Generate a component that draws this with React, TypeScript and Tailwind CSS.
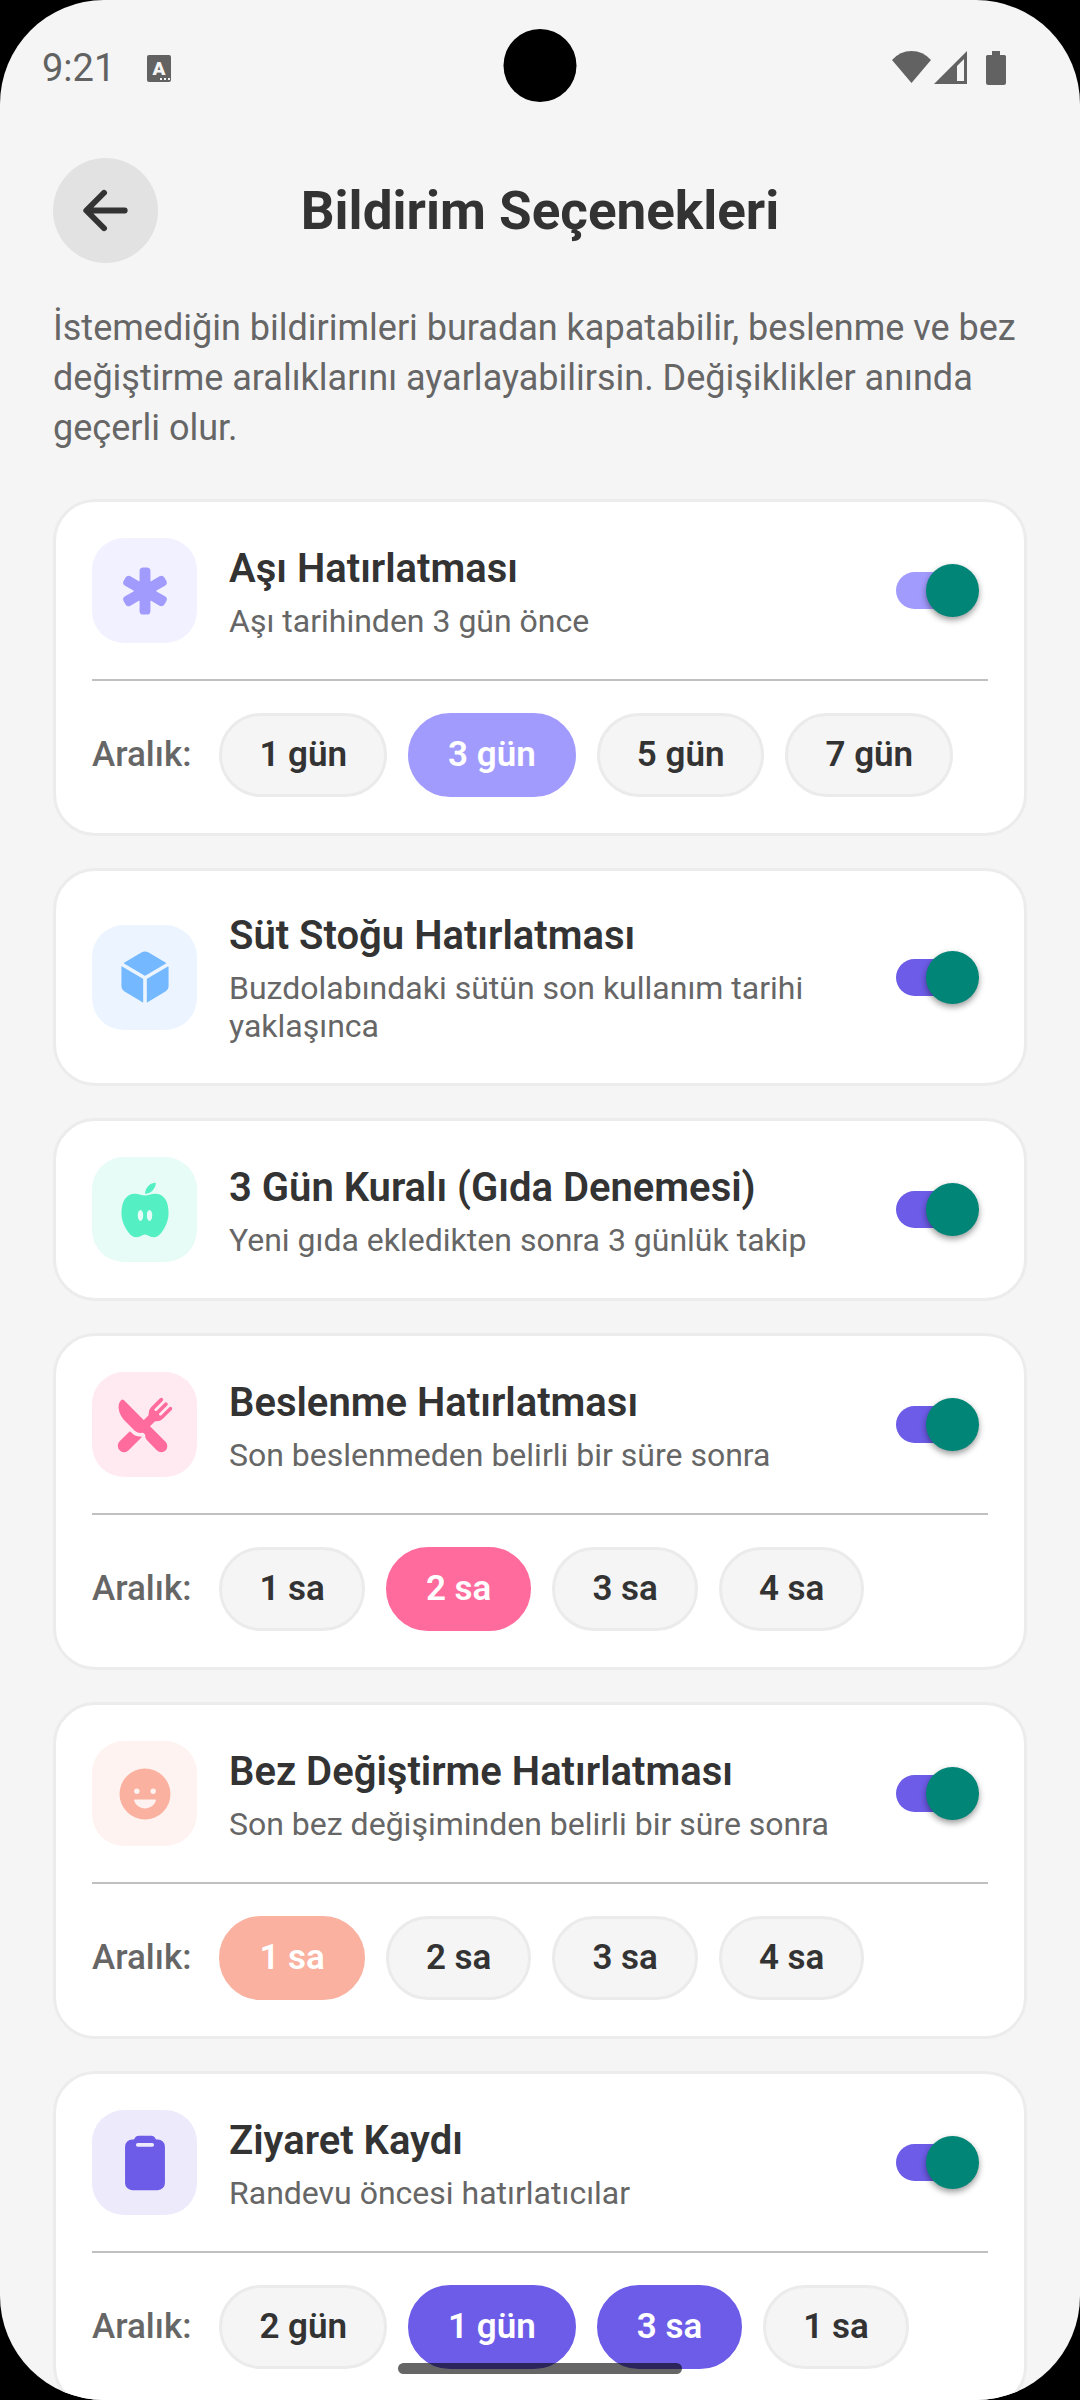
import { useState } from 'react'
import type { IconType } from 'react-icons'
import {
  IoArrowBack,
  IoClipboard,
  IoCube,
  IoHappy,
  IoMedical,
  IoNutrition,
  IoRestaurant,
} from 'react-icons/io5'
import { clsx } from 'clsx'

interface Reminder {
  id: string
  title: string
  subtitle: string
  icon: IconType
  iconClass: string
  trackClass: string
  chipClass?: string
  options?: string[]
  selected?: string[]
}

const reminders: Reminder[] = [
  {
    id: 'vaccine',
    title: 'Aşı Hatırlatması',
    subtitle: 'Aşı tarihinden 3 gün önce',
    icon: IoMedical,
    iconClass: 'bg-[#f2f1ff] text-[#a29bfe]',
    trackClass: 'checked:bg-[#a29bfe]',
    chipClass: 'bg-[#a29bfe] border-[#a29bfe]',
    options: ['1 gün', '3 gün', '5 gün', '7 gün'],
    selected: ['3 gün'],
  },
  {
    id: 'milk',
    title: 'Süt Stoğu Hatırlatması',
    subtitle: 'Buzdolabındaki sütün son kullanım tarihi yaklaşınca',
    icon: IoCube,
    iconClass: 'bg-[#ecf5ff] text-[#74b9ff]',
    trackClass: 'checked:bg-[#6c5ce7]',
  },
  {
    id: 'food',
    title: '3 Gün Kuralı (Gıda Denemesi)',
    subtitle: 'Yeni gıda ekledikten sonra 3 günlük takip',
    icon: IoNutrition,
    iconClass: 'bg-[#e8fcf7] text-[#55efc4]',
    trackClass: 'checked:bg-[#6c5ce7]',
  },
  {
    id: 'feeding',
    title: 'Beslenme Hatırlatması',
    subtitle: 'Son beslenmeden belirli bir süre sonra',
    icon: IoRestaurant,
    iconClass: 'bg-[#ffeaf1] text-[#ff6b9d]',
    trackClass: 'checked:bg-[#6c5ce7]',
    chipClass: 'bg-[#ff6b9d] border-[#ff6b9d]',
    options: ['1 sa', '2 sa', '3 sa', '4 sa'],
    selected: ['2 sa'],
  },
  {
    id: 'diaper',
    title: 'Bez Değiştirme Hatırlatması',
    subtitle: 'Son bez değişiminden belirli bir süre sonra',
    icon: IoHappy,
    iconClass: 'bg-[#fef3f0] text-[#fab1a0]',
    trackClass: 'checked:bg-[#6c5ce7]',
    chipClass: 'bg-[#fab1a0] border-[#fab1a0]',
    options: ['1 sa', '2 sa', '3 sa', '4 sa'],
    selected: ['1 sa'],
  },
  {
    id: 'visit',
    title: 'Ziyaret Kaydı',
    subtitle: 'Randevu öncesi hatırlatıcılar',
    icon: IoClipboard,
    iconClass: 'bg-[#edeafc] text-[#6c5ce7]',
    trackClass: 'checked:bg-[#6c5ce7]',
    chipClass: 'bg-[#6c5ce7] border-[#6c5ce7]',
    options: ['2 gün', '1 gün', '3 sa', '1 sa'],
    selected: ['1 gün', '3 sa'],
  },
]

function StatusBar() {
  return (
    <div className="relative flex h-[136px] shrink-0 items-center justify-between pr-[74px] pl-[42px] text-[#626262]">
      <div className="flex items-center gap-[32px]">
        <span className="text-[38px] leading-[44px]">9:21</span>
        <svg width="24" height="27" viewBox="0 0 24 27" aria-hidden="true">
          <rect width="24" height="27" rx="2" fill="currentColor" />
          <text x="12" y="20" textAnchor="middle" fontSize="19" fontWeight="900" fill="#f5f5f5">
            A
          </text>
          <path d="M13 23h2v2h-2zM17 23h2v2h-2zM21 23h2v2h-2z" fill="#f5f5f5" />
        </svg>
      </div>
      <div className="absolute top-[29px] left-1/2 size-[73px] -translate-x-1/2 rounded-full bg-black" />
      <div className="flex items-center" aria-hidden="true">
        <svg width="39" height="34" viewBox="0 0 39 34" fill="currentColor">
          <path d="M19.500 32 L0 9 Q8 0 19.500 0 Q31 0 39 9Z" />
        </svg>
        <svg className="ml-[3px]" width="33" height="34" viewBox="0 0 33 34" fill="currentColor">
          <path fillRule="evenodd" d="M33 0V33H0ZM30 8L23 15V30H30Z" />
        </svg>
        <svg className="ml-[19px]" width="20" height="34" viewBox="0 0 20 34" fill="currentColor">
          <path d="M6 0h8v4h4.500q1.500 0 1.500 1.500v26q0 2.500-2.500 2.500h-15q-2.500 0-2.500-2.500v-26q0-1.500 1.500-1.500h4.500z" />
        </svg>
      </div>
    </div>
  )
}

function ReminderCard({ reminder }: { reminder: Reminder }) {
  const [enabled, setEnabled] = useState(true)
  const [selected, setSelected] = useState(reminder.selected ?? [])
  const Icon = reminder.icon

  function toggle(option: string) {
    setSelected(prev =>
      prev.includes(option) ? prev.filter(o => o !== option) : [...prev, option]
    )
  }

  return (
    <section className="rounded-[42px] border-[3px] border-[#ececec] bg-white p-[36px]">
      <div className="flex items-center gap-[32px]">
        <div
          className={clsx(
            'flex size-[105px] shrink-0 items-center justify-center rounded-[32px]',
            reminder.iconClass
          )}
        >
          <Icon size={58} />
        </div>
        <label htmlFor={reminder.id} className="min-w-0 flex-1 pb-[2px]">
          <span className="mb-[4px] block text-[40px] leading-[58px] font-semibold text-[#333333]">
            {reminder.title}
          </span>
          <span className="block text-[32px] leading-[38px] text-[#666666]">
            {reminder.subtitle}
          </span>
        </label>
        <input
          id={reminder.id}
          type="checkbox"
          role="switch"
          checked={enabled}
          onChange={e => setEnabled(e.target.checked)}
          className={clsx(
            'relative mr-[14px] h-[37px] w-[78px] shrink-0 appearance-none rounded-full bg-[#cccccc]',
            'before:absolute before:-top-[8px] before:left-0 before:size-[53px] before:rounded-full before:bg-[#f5f5f5] before:shadow-[0_3px_6px_rgba(0,0,0,0.4)]',
            'checked:before:left-[30px] checked:before:bg-[#008577]',
            reminder.trackClass
          )}
        />
      </div>
      {reminder.options && (
        <div className="mt-[36px] flex items-center gap-[28px] border-t-2 border-[#c0c0c0] pt-[32px]">
          <span className="text-[35px] leading-[40px] font-medium text-[#666666]">Aralık:</span>
          <div className="flex gap-[21px]">
            {reminder.options.map(option => {
              const active = selected.includes(option)
              return (
                <button
                  key={option}
                  type="button"
                  aria-pressed={active}
                  onClick={() => toggle(option)}
                  className={clsx(
                    'h-[84px] rounded-full border-[3px] px-[37px] text-[35px] leading-[40px] font-semibold whitespace-nowrap',
                    active
                      ? [reminder.chipClass, 'text-white']
                      : 'border-[#ebebeb] bg-[#f5f5f5] text-[#333333]'
                  )}
                >
                  {option}
                </button>
              )
            })}
          </div>
        </div>
      )}
    </section>
  )
}

export default function App() {
  return (
    <div className="h-screen bg-black font-[Roboto,sans-serif]">
      <div className="relative flex h-full flex-col overflow-hidden rounded-[104px] bg-[#f5f5f5]">
        <StatusBar />
        <header className="flex shrink-0 items-center justify-between px-[53px] pt-[22px]">
          <button
            type="button"
            aria-label="Geri"
            className="flex size-[105px] items-center justify-center rounded-full bg-[#e2e2e2] text-[#333333]"
          >
            <IoArrowBack size={63} />
          </button>
          <h1 className="text-[53px] leading-[64px] font-bold text-[#333333]">
            Bildirim Seçenekleri
          </h1>
          <div className="w-[105px]" />
        </header>
        <main className="min-h-0 flex-1 overflow-hidden px-[53px] pt-[40px]">
          <p className="mb-[46px] text-[36px] leading-[50px] text-[#666666]">
            İstemediğin bildirimleri buradan kapatabilir, beslenme ve bez değiştirme aralıklarını
            ayarlayabilirsin. Değişiklikler anında geçerli olur.
          </p>
          <div className="flex flex-col gap-[32px]">
            {reminders.map(reminder => (
              <ReminderCard key={reminder.id} reminder={reminder} />
            ))}
          </div>
        </main>
        <div className="absolute bottom-[26px] left-1/2 h-[11px] w-[284px] -translate-x-1/2 rounded-full bg-black/60" />
      </div>
    </div>
  )
}
